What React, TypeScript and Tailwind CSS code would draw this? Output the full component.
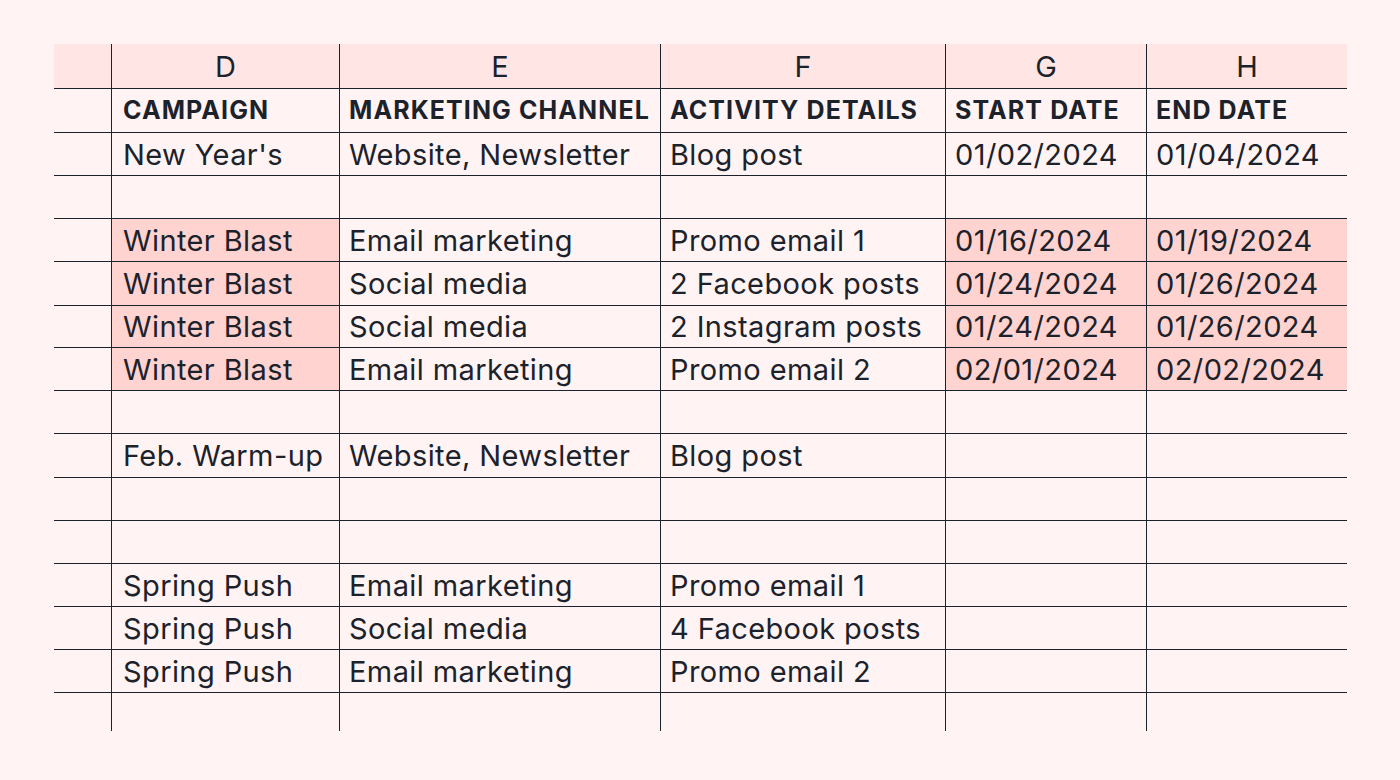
const cols = ["w-[57px]", "w-[228px]", "w-[321px]", "w-[285px]", "w-[201px]", "w-[201px]"];

type Row = { h: string; cells: string[]; hl?: boolean; bold?: boolean; last?: boolean };

const rows: Row[] = [
  { h: "h-[44px]", bold: true, cells: ["", "CAMPAIGN", "MARKETING CHANNEL", "ACTIVITY DETAILS", "START DATE", "END DATE"] },
  { h: "h-[43px]", cells: ["", "New Year's", "Website, Newsletter", "Blog post", "01/02/2024", "01/04/2024"] },
  { h: "h-[43px]", cells: ["", "", "", "", "", ""] },
  { h: "h-[43px]", hl: true, cells: ["", "Winter Blast", "Email marketing", "Promo email 1", "01/16/2024", "01/19/2024"] },
  { h: "h-[44px]", hl: true, cells: ["", "Winter Blast", "Social media", "2 Facebook posts", "01/24/2024", "01/26/2024"] },
  { h: "h-[42px]", hl: true, cells: ["", "Winter Blast", "Social media", "2 Instagram posts", "01/24/2024", "01/26/2024"] },
  { h: "h-[43px]", hl: true, cells: ["", "Winter Blast", "Email marketing", "Promo email 2", "02/01/2024", "02/02/2024"] },
  { h: "h-[43px]", cells: ["", "", "", "", "", ""] },
  { h: "h-[44px]", cells: ["", "Feb. Warm-up", "Website, Newsletter", "Blog post", "", ""] },
  { h: "h-[43px]", cells: ["", "", "", "", "", ""] },
  { h: "h-[43px]", cells: ["", "", "", "", "", ""] },
  { h: "h-[43px]", cells: ["", "Spring Push", "Email marketing", "Promo email 1", "", ""] },
  { h: "h-[43px]", cells: ["", "Spring Push", "Social media", "4 Facebook posts", "", ""] },
  { h: "h-[43px]", cells: ["", "Spring Push", "Email marketing", "Promo email 2", "", ""] },
  { h: "h-[38px]", last: true, cells: ["", "", "", "", "", ""] },
];

const letters = ["", "D", "E", "F", "G", "H"];

export default function App() {
  return (
    <div
      className="w-[1400px] h-[780px] bg-[#fff4f3] pt-[44px] pl-[54px] text-[#1b222b]"
      style={{ fontFamily: "Inter, 'Noto Sans', sans-serif" }}
    >
      <div className="flex flex-col w-[1293px]">
        {/* column letters */}
        <div className="flex h-[45px] bg-[#ffe6e5] border-b border-[#1b222b]">
          {letters.map((l, i) => (
            <div
              key={i}
              className={`${cols[i]} ${i > 0 ? "border-l border-[#1b222b]" : ""} flex items-center justify-center text-[29px] leading-none pt-[1px]`}
            >
              {l}
            </div>
          ))}
        </div>

        {rows.map((r, ri) => (
          <div key={ri} className={`flex ${r.h} ${r.last ? "" : "border-b border-[#1b222b]"}`}>
            {r.cells.map((c, ci) => {
              const hl = r.hl && (ci === 1 || ci === 4 || ci === 5);
              return (
                <div
                  key={ci}
                  className={`${cols[ci]} ${ci > 0 ? "border-l border-[#1b222b]" : ""} ${hl ? "bg-[#ffd3cf]" : ""} ${
                    ci === 1 ? "pl-[11px]" : "pl-[9px]"
                  } flex items-center whitespace-nowrap ${
                    r.bold ? "text-[25px] font-bold tracking-[1.1px]" : "text-[29px] tracking-[0.4px]"
                  } leading-none`}
                >
                  {c}
                </div>
              );
            })}
          </div>
        ))}
      </div>
    </div>
  );
}
